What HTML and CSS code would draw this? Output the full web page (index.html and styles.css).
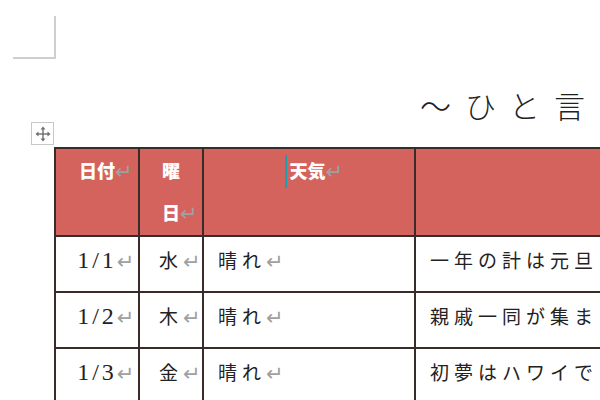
FILE: index.html
```html
<!DOCTYPE html>
<html lang="ja">
<head>
<meta charset="utf-8">
<link rel="stylesheet" href="styles.css">
</head>
<body>
<div class="page">
  <div class="corner"></div>
  <h1 class="title">～ひと言～</h1>
  <div class="table-wrap">
    <div class="handle">
      <svg viewBox="0 0 16 16" width="16" height="16">
        <g fill="#6f6f6f" stroke="#6f6f6f" stroke-width="1.4">
          <line x1="8" y1="3" x2="8" y2="13"/>
          <line x1="3" y1="8" x2="13" y2="8"/>
          <polygon points="8,0.5 5.5,3.5 10.5,3.5" stroke="none"/>
          <polygon points="8,15.5 5.5,12.5 10.5,12.5" stroke="none"/>
          <polygon points="0.5,8 3.5,5.5 3.5,10.5" stroke="none"/>
          <polygon points="15.5,8 12.5,5.5 12.5,10.5" stroke="none"/>
        </g>
      </svg>
    </div>
    <table class="diary">
      <colgroup>
        <col class="c-date"><col class="c-day"><col class="c-weather"><col class="c-note">
      </colgroup>
      <thead>
        <tr>
          <th class="center">日付<span class="ret">↵</span></th>
          <th class="center">曜<br>日<span class="ret">↵</span></th>
          <th class="center"><span class="caret"></span>天気<span class="ret">↵</span></th>
          <th></th>
        </tr>
      </thead>
      <tbody>
        <tr>
          <td class="center num">1/1<span class="ret">↵</span></td>
          <td class="center">水<span class="ret">↵</span></td>
          <td>晴れ<span class="ret">↵</span></td>
          <td>一年の計は元旦にあり</td>
        </tr>
        <tr>
          <td class="center num">1/2<span class="ret">↵</span></td>
          <td class="center">木<span class="ret">↵</span></td>
          <td>晴れ<span class="ret">↵</span></td>
          <td>親戚一同が集まる</td>
        </tr>
        <tr>
          <td class="center num">1/3<span class="ret">↵</span></td>
          <td class="center">金<span class="ret">↵</span></td>
          <td>晴れ<span class="ret">↵</span></td>
          <td>初夢はハワイで</td>
        </tr>
      </tbody>
    </table>
  </div>
</div>
</body>
</html>
```

FILE: styles.css
```css
html, body {
  margin: 0;
  padding: 0;
  background: #fff;
  overflow: hidden;
  width: 600px;
  height: 400px;
}
.page {
  padding-top: 16px;
  font-family: "Noto Sans CJK JP", "Noto Sans", sans-serif;
  color: #222;
}
.corner {
  margin-left: 13px;
  width: 41px;
  height: 41px;
  border-right: 2px solid #cfcfcf;
  border-bottom: 2px solid #cfcfcf;
}
.title {
  margin: 26px 0 0 420px;
  font-size: 31px;
  font-weight: 300;
  line-height: 40px;
  letter-spacing: 14px;
  white-space: nowrap;
  color: #222;
}
.table-wrap {
  position: relative;
  margin: 22px 0 0 54px;
}
.handle {
  position: absolute;
  left: -23px;
  top: -25px;
  width: 21px;
  height: 21px;
  border: 1px solid #c8c8c8;
  background: #fff;
  display: flex;
  align-items: center;
  justify-content: center;
}
.diary {
  border-collapse: collapse;
  table-layout: fixed;
  width: 662px;
}
.c-date { width: 84px; }
.c-day { width: 64px; }
.c-weather { width: 212px; }
.c-note { width: 302px; }
.diary th, .diary td {
  border: 2px solid #3a2b2b;
  vertical-align: top;
  padding: 0 14px;
  text-align: left;
  white-space: nowrap;
}
.diary th {
  background: #d4635e;
  color: #fff;
  font-weight: 900;
  font-size: 18px;
  line-height: 42px;
  height: 88px;
  padding-top: 0;
  box-sizing: border-box;
}
.diary td {
  font-size: 19px;
  line-height: 42px;
  height: 56px;
  padding-top: 2px;
  box-sizing: border-box;
  letter-spacing: 5px;
  color: #222;
}
.diary .center {
  text-align: center;
  padding-left: 0;
  padding-right: 0;
}
.diary td.num {
  font-family: "Liberation Serif", serif;
  font-size: 24px;
  letter-spacing: 3px;
}
.ret {
  display: inline-block;
  width: 14px;
  margin-right: -14px;
  margin-left: 0;
  font-family: "DejaVu Sans", sans-serif;
  font-size: 21px;
  line-height: 20px;
  font-weight: 400;
  color: #a0a0a0;
  letter-spacing: 0;
  vertical-align: -1px;
}
.diary td:nth-child(3) .ret { margin-right: 0; }
.caret {
  display: inline-block;
  width: 2px;
  height: 33px;
  background: #1a9fb0;
  vertical-align: -10px;
  margin-left: -8px;
  margin-right: 3px;
}
```
